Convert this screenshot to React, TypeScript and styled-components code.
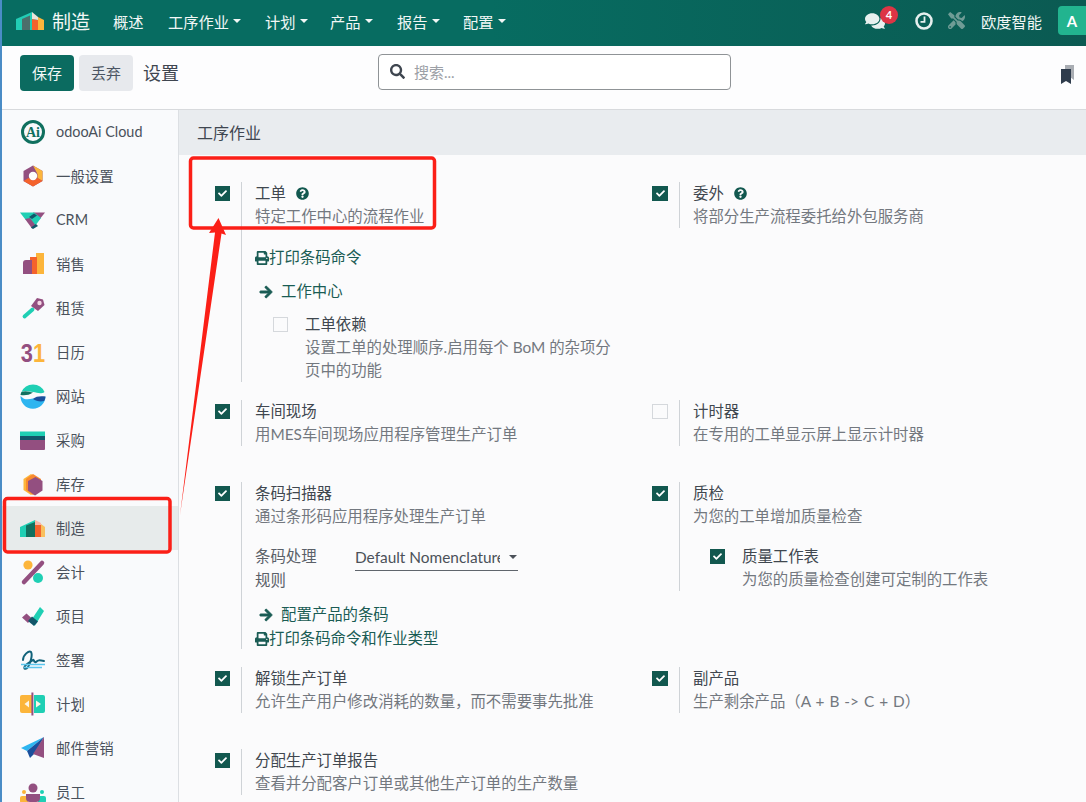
import React from "react";
import styled, { createGlobalStyle } from "styled-components";
import { FaArrowRight, FaCheck, FaComments, FaPrint, FaQuestionCircle, FaSearch, FaTools } from "react-icons/fa";

const Global = createGlobalStyle`
  html, body { margin: 0; padding: 0; height: 802px; overflow: hidden; background: #f9fafb; }
  body { font-family: "Lato", "Noto Sans CJK SC", sans-serif; font-size: 15px; color: #374151; }
  * { box-sizing: border-box; }
`;

const Page = styled.div`
  position: relative; width: 1086px; height: 802px; overflow: hidden;
  border-left: 2px solid #4a8cc6; display: flex; flex-direction: column;
`;
const TopBar = styled.header`
  height: 46px; flex: none; display: flex; align-items: center; color: #f2f7f6; padding-bottom: 5px;
  background: linear-gradient(90deg, #076c61 0%, #076c61 45%, #0b5a52 100%);
`;
const Brand = styled.div`
  display: flex; align-items: center; gap: 7px; margin-left: 13px; margin-right: 21px;
  font-size: 19px; width: 77px; flex: none; white-space: nowrap;
`;
const Menu = styled.nav`display: flex; align-items: center;`;
const MenuItem = styled.span<{ $w: number }>`
  display: flex; align-items: center; gap: 4px; width: ${p => p.$w}px; font-size: 15.25px; white-space: nowrap;
`;
const Caret = styled.i`
  width: 0; height: 0; border-left: 4px solid transparent; border-right: 4px solid transparent;
  border-top: 4px solid currentColor; display: inline-block; flex: none;
`;
const TopRight = styled.div`margin-left: auto; display: flex; align-items: center; height: 41px;`;
const ChatWrap = styled.span`position: relative; display: flex; margin-right: 30px; color: #e8f0ef;`;
const Badge = styled.span`
  position: absolute; left: 15px; top: -5px; width: 18px; height: 18px; border-radius: 50%; background: #dc3545;
  color: #fff; font-size: 11px; font-weight: 700; display: flex; align-items: center; justify-content: center;
`;
const ToolsIcon = styled.span`display: flex; margin: 0 16px 0 15px; color: #6f9c96;`;
const UserName = styled.span`font-size: 15.25px; margin-right: 16px; white-space: nowrap;`;
const Avatar = styled.span`
  width: 28px; height: 29px; background: #22b48f; border-radius: 4px 0 0 4px; color: #fff; font-size: 15px;
  font-weight: 700; display: flex; align-items: center; justify-content: center;
`;
const ControlPanel = styled.div`
  height: 64px; flex: none; background: #fdfdfe; border-bottom: 1px solid #d8dadd;
  display: flex; align-items: center; padding: 0 10px 9px 18px;
`;
const Btn = styled.button<{ $primary?: boolean }>`
  height: 36px; width: 54px; border: 0; border-radius: 4px; padding: 0 0 2px; font: inherit; font-size: 15px; margin-right: 5px;
  background: ${p => (p.$primary ? "#0b6b60" : "#e7e9ed")};
  color: ${p => (p.$primary ? "#f3f8f7" : "#4b5563")};
`;
const PanelTitle = styled.span`font-size: 18px; margin-left: 5px; padding-bottom: 2px; color: #3f4650; width: 235px; flex: none;`;
const SearchBox = styled.div`
  width: 353px; height: 36px; border: 1px solid #8f9396; border-radius: 4px; display: flex; align-items: center;
  padding: 0 0 1px 11px; margin-bottom: 2px; gap: 9px; color: #3f4650; background: #fff;
`;
const Placeholder = styled.span`font-size: 15px; color: #9ca0a6;`;
const BookmarkSlot = styled.span`margin-left: auto; margin-top: 3px; display: flex;`;
const Body = styled.div`flex: 1; display: flex; min-height: 0;`;
const Sidebar = styled.aside`
  width: 177px; flex: none; background: #f9fafc; border-right: 1px solid #dcdfe3; overflow: hidden;
`;
const NavRow = styled.div<{ $active?: boolean }>`
  height: 44px; display: flex; align-items: center; padding: 0 0 1px 18px; gap: 10px; font-size: 14.4px;
  color: #4a515b; background: ${p => (p.$active ? "#e7ebeb" : "transparent")}; white-space: nowrap;
`;
const Main = styled.main`flex: 1; min-width: 0; background: #fbfbfc;`;
const SectionHead = styled.div`
  height: 45px; background: #e9ecef; display: flex; align-items: center; padding: 0 0 2px 18px;
  font-size: 16px; color: #3f4650;
`;
const Grid = styled.div`
  display: grid; grid-template-columns: 438px 438px; padding: 27px 0 0 10px;
`;
const CheckBox = styled.span<{ $on?: boolean }>`
  width: 15px; height: 15px; flex: none; margin-top: 4px; display: flex; align-items: center; justify-content: center;
  color: #fff; border: 1px solid ${p => (p.$on ? "#12584f" : "#d5d8dc")};
  background: ${p => (p.$on ? "#12584f" : "#fbfbfc")};
`;
const Cell = styled.section`
  display: flex; align-items: flex-start; min-height: 82px; padding: 0 0 18px 26px;
  &:nth-child(even) { padding-left: 25px; }
  &:nth-child(even) > ${CheckBox} { width: 16px; }
`;
const Pane = styled.div`
  margin-left: 11px; padding-left: 13px; border-left: 1px solid #cfd3d7; flex: 1; min-width: 0;
`;
const Label = styled.div`
  line-height: 23px; font-size: 15.4px; color: #40474f; display: flex; align-items: center; gap: 10px;
`;
const HelpIcon = styled.span`display: flex; color: #12584f;`;
const Desc = styled.div`line-height: 23px; font-size: 15.4px; color: #73787f; white-space: nowrap;`;
const DescWrap = styled(Desc)`white-space: normal; width: 310px;`;
const DescSpaced = styled(Desc)`word-spacing: 1px;`;
const LinkRow = styled.div<{ $top: number; $arrow?: boolean; $tail?: number }>`
  margin-top: ${p => p.$top}px; margin-bottom: ${p => p.$tail ?? 0}px; line-height: 23px; font-size: 15.4px; color: #1a5c54;
  display: flex; align-items: center; gap: ${p => (p.$arrow ? 8 : 0)}px; padding-left: ${p => (p.$arrow ? 4 : 0)}px;
`;
const ArrowGlyph = styled(FaArrowRight)`stroke: currentColor; stroke-width: 30;`;
const SubSetting = styled.div<{ $top: number; $left: number }>`
  margin-top: ${p => p.$top}px; margin-left: ${p => p.$left}px; display: flex; align-items: flex-start;
`;
const SubText = styled.div`margin-left: 17px;`;
const FieldRow = styled.div`margin-top: 16px; display: flex; align-items: flex-start;`;
const FieldLabel = styled.div`width: 100px; flex: none; line-height: 24px; font-size: 15.4px; color: #5a6068; padding-right: 24px;`;
const SelectBox = styled.div`
  width: 163px; height: 27px; border-bottom: 1px solid #5f656c; display: flex; align-items: center;
  justify-content: space-between; font-size: 15.4px; color: #4b5159; overflow: hidden; padding-right: 1px;
`;
const SelectText = styled.span`width: 145px; overflow: hidden; white-space: nowrap;`;
const Annotation = styled.svg`position: absolute; left: -2px; top: 0; pointer-events: none;`;
const IconSvg = styled.svg`flex: none; display: block; overflow: visible;`;

const NavIcon = ({ children }: { children: React.ReactNode }) => (
  <IconSvg width="26" height="26" viewBox="0 0 26 26">{children}</IconSvg>
);

const teal = "#1fcfb4", purple = "#934f80", orange = "#f98a2f", amber = "#fcb53b", deep = "#12566a", red = "#f4622c";

const icons: Record<string, React.ReactNode> = {
  cloud: <>
    <circle cx="13" cy="13" r="10.5" fill="none" stroke="#10705f" strokeWidth="3" />
    <text x="13" y="18" textAnchor="middle" fontFamily="Liberation Serif, serif" fontWeight="700" fontSize="14" fill="#10705f">Ai</text>
  </>,
  settings: <>
    <path d="M13 2.5 22.5 8v10L13 23.5 3.5 18V8Z" fill={purple} />
    <path d="M13 2.5 22.5 8v10l-5-3V11Z" fill={amber} />
    <path d="M3.5 18 8.5 15 13 17.5l4.500-2.500 5 3L13 23.500Z" fill={red} />
    <circle cx="13" cy="13" r="4.200" fill="#fdfdfd" />
  </>,
  crm: <>
    <path d="M13 5.500H25L19.500 12.500Z" fill={purple} />
    <path d="M0 5.500H14L21 11 15 19 5 12Z" fill={teal} />
    <path d="M5 12 10 11 16 19 12 21.500Z" fill={purple} />
    <path d="M9 10 14 6.500 17 8.500 12 12Z" fill={deep} />
    <path d="M11 20.500 16 17 18 19 13 22Z" fill={deep} />
  </>,
  sales: <>
    <path d="M16 2h8v21h-8Z" fill={amber} />
    <path d="M10 6h7v17h-7Z" fill={red} />
    <path d="M3 12a3 3 0 0 1 3-3h6v14H3Z" fill={purple} />
  </>,
  rental: <>
    <path d="M12.500 14.500 4.500 21.500" stroke={teal} strokeWidth="3.800" strokeLinecap="round" />
    <path d="M17 3 23 4.500 24.500 10 18 16 11 11Z" fill={purple} />
    <circle cx="19.500" cy="8" r="2.200" fill="#f5d5e4" />
  </>,
  calendar: <>
    <text y="23" transform="scale(.84 1)" x="1" fontFamily="Liberation Sans, sans-serif" fontWeight="700" fontSize="26">
      <tspan fill={purple}>3</tspan><tspan fill={amber}>1</tspan>
    </text>
  </>,
  website: <>
    <path d="M1.500 9A12.500 12.500 0 0 1 24.500 9C20 12 17 9 13 9 9 9 6 7 1.500 9Z" fill={teal} />
    <path d="M.5 12C.8 10.500 1 9.500 1.500 9 6 7 9 9 13 9.500 9 12.500 4 12.500.5 12Z" fill="#12705f" />
    <path d="M.5 13C5 18 9 16 13 15.500 17 15 21 15 25.500 13.500A12.500 12.500 0 0 1 .5 13Z" fill="#2eb5f0" />
    <path d="M13 16C16 13 21 13 25.400 13.500 25.400 15 25 16.500 24 18 20 19 16 18 13 16Z" fill="#1a4f9c" />
  </>,
  purchase: <>
    <path d="M0 4.500h25V9H0Z" fill={teal} />
    <path d="M0 9h25v4H0Z" fill={deep} />
    <path d="M0 13h25v9a1 1 0 0 1-1 1H1a1 1 0 0 1-1-1Z" fill={purple} />
  </>,
  inventory: <>
    <path d="M11 3 19 8V19L11 24 3.500 19V8Z" fill={amber} />
    <path d="M13 3 21 8V19L13 24 6 19V8Z" fill={orange} />
    <path d="M15.500 6 22.500 10V19.500L15 24.500 8 19.500V10Z" fill={purple} />
  </>,
  mrp: <>
    <path d="M0 12 15 5V22H0Z" fill={teal} />
    <path d="M6 10.500 15 7V22H6Z" fill="#12705f" />
    <path d="M15 10h6v12h-6Z" fill={red} />
    <path d="M21 9l4 3v10h-4Z" fill={amber} opacity=".8" />
    <path d="M15 5 21 8V10H15Z" fill="#f9b7a8" />
  </>,
  accounting: <>
    <circle cx="8" cy="6" r="4.600" fill={amber} />
    <circle cx="18" cy="19" r="5" fill={teal} />
    <path d="M4 23 22 4" stroke={purple} strokeWidth="4.500" strokeLinecap="round" />
  </>,
  project: <>
    <path d="M2 14.500 6.500 10.500 12 15.500 8 20Z" fill={purple} />
    <path d="M10 19 20 4 24 8 15 22.500Z" fill={teal} />
    <path d="M8 18 12 13.500 18 18.500 14 23Z" fill={deep} />
  </>,
  sign: <>
    <path d="M3 13C3 8 9 3 11 5 13 8 10 17 8 20 6 23 3 22 5 19 7 16 12 14 13 13 14 12 14 16 16 15 18 13 19 13 24 14" fill="none" stroke="#11627a" strokeWidth="2" strokeLinecap="round" />
    <path d="M1 17.500h24M4 20.500h18" stroke="#5cc6ee" strokeWidth="1.400" />
  </>,
  planning: <>
    <path d="M2 4h10v18H2a2 2 0 0 1-2-2V6a2 2 0 0 1 2-2Z" fill={amber} />
    <path d="M14 4h9a2 2 0 0 1 2 2v14a2 2 0 0 1-2 2h-9Z" fill={teal} />
    <path d="M12.400 1.500v23" stroke={purple} strokeWidth="2" />
    <path d="M9 9.500 4.500 13 9 16.500ZM16 9.500 21 13l-5 3.500Z" fill="#fdf6e8" />
  </>,
  mail: <>
    <path d="M24 2 1 13l6 3Z" fill="#2eb5f0" />
    <path d="M24 2 7 16l3 7 5-5Z" fill="#1a4f9c" />
    <path d="M24 2 13 19l11 4Z" fill={purple} />
  </>,
  employee: <>
    <circle cx="4" cy="13" r="2" fill={amber} />
    <circle cx="22" cy="13" r="2" fill={teal} />
    <path d="M0 19a2 2 0 0 1 2-2h6v7H2a2 2 0 0 1-2-2Z" fill={amber} />
    <path d="M18 17h6a2 2 0 0 1 2 2v3a2 2 0 0 1-2 2h-6Z" fill={teal} />
    <circle cx="13" cy="9" r="4.500" fill={purple} />
    <path d="M6 15h14v4a4 4 0 0 1-4 4h-6a4 4 0 0 1-4-4Z" fill={purple} />
  </>,
};

const navItems = [
  ["cloud", "odooAi Cloud"], ["settings", "一般设置"], ["crm", "CRM"], ["sales", "销售"], ["rental", "租赁"],
  ["calendar", "日历"], ["website", "网站"], ["purchase", "采购"], ["inventory", "库存"], ["mrp", "制造"],
  ["accounting", "会计"], ["project", "项目"], ["sign", "签署"], ["planning", "计划"], ["mail", "邮件营销"], ["employee", "员工"],
];

const menu: [string, number, boolean][] = [
  ["概述", 55, false], ["工序作业", 97, true], ["计划", 65, true], ["产品", 67, true], ["报告", 66, true], ["配置", 60, true],
];

const Check = ({ on }: { on?: boolean }) => <CheckBox $on={on}>{on && <FaCheck size={9} />}</CheckBox>;

const Setting = ({ on, children }: { on?: boolean; children: React.ReactNode }) => (
  <Cell><Check on={on} /><Pane>{children}</Pane></Cell>
);

const PrintLink = ({ top, tail, text }: { top: number; tail?: number; text: string }) => (
  <LinkRow $top={top} $tail={tail}><FaPrint size={14} />{text}</LinkRow>
);
const ArrowLink = ({ top, text }: { top: number; text: string }) => (
  <LinkRow $top={top} $arrow><ArrowGlyph size={14} />{text}</LinkRow>
);
const Help = () => <HelpIcon><FaQuestionCircle size={13} /></HelpIcon>;

export default function App() {
  return (
    <Page>
      <Global />
      <TopBar>
        <Brand>
          <IconSvg width="30" height="24" viewBox="0 0 30 24">
            <path d="M1 10 17 3v18H1Z" fill="#22cdb5" />
            <path d="M7 10 15 6.500V21H7Z" fill="#4c6f6b" />
            <path d="M17 10l6 1v10h-6Z" fill="#f4622c" />
            <path d="M23 8l6 3v10h-6Z" fill="#fcb53b" />
            <path d="M17 3l6 5v3l-6-1Z" fill="#e9e3da" />
          </IconSvg>
          制造
        </Brand>
        <Menu>
          {menu.map(([t, w, c]) => (
            <MenuItem key={t} $w={w}>{t}{c && <Caret />}</MenuItem>
          ))}
        </Menu>
        <TopRight>
          <ChatWrap><FaComments size={20} /><Badge>4</Badge></ChatWrap>
          <IconSvg width="18" height="18" viewBox="0 0 18 18">
            <circle cx="9" cy="9" r="7.500" fill="none" stroke="#e6efee" strokeWidth="2.600" />
            <path d="M9.500 4.500V9.800H5.500" fill="none" stroke="#e6efee" strokeWidth="1.800" />
          </IconSvg>
          <ToolsIcon><FaTools size={17} /></ToolsIcon>
          <UserName>欧度智能</UserName>
          <Avatar>A</Avatar>
        </TopRight>
      </TopBar>
      <ControlPanel>
        <Btn $primary>保存</Btn>
        <Btn>丢弃</Btn>
        <PanelTitle>设置</PanelTitle>
        <SearchBox><FaSearch size={15} /><Placeholder>搜索...</Placeholder></SearchBox>
        <BookmarkSlot>
          <IconSvg width="16" height="22" viewBox="0 0 16 22">
            <path d="M5 1h9v15l-4-3-5 3Z" fill="#a9adb3" />
            <path d="M1 5h10v15l-5-3-5 3Z" fill="#2f3c4c" />
          </IconSvg>
        </BookmarkSlot>
      </ControlPanel>
      <Body>
        <Sidebar>
          {navItems.map(([k, t]) => (
            <NavRow key={t} $active={k === "mrp"}>
              <NavIcon>{icons[k]}</NavIcon>{t}
            </NavRow>
          ))}
        </Sidebar>
        <Main>
          <SectionHead>工序作业</SectionHead>
          <Grid>
            <Setting on>
              <Label>工单<Help /></Label>
              <Desc>特定工作中心的流程作业</Desc>
              <PrintLink top={18} text="打印条码命令" />
              <ArrowLink top={11} text="工作中心" />
              <SubSetting $top={10} $left={18}>
                <Check />
                <SubText>
                  <Label>工单依赖</Label>
                  <DescWrap>设置工单的处理顺序.启用每个 BoM 的杂项分页中的功能</DescWrap>
                </SubText>
              </SubSetting>
            </Setting>
            <Setting on>
              <Label>委外<Help /></Label>
              <Desc>将部分生产流程委托给外包服务商</Desc>
            </Setting>
            <Setting on>
              <Label>车间现场</Label>
              <Desc>用MES车间现场应用程序管理生产订单</Desc>
            </Setting>
            <Setting>
              <Label>计时器</Label>
              <Desc>在专用的工单显示屏上显示计时器</Desc>
            </Setting>
            <Setting on>
              <Label>条码扫描器</Label>
              <Desc>通过条形码应用程序处理生产订单</Desc>
              <FieldRow>
                <FieldLabel>条码处理规则</FieldLabel>
                <SelectBox><SelectText>Default Nomenclature</SelectText><Caret /></SelectBox>
              </FieldRow>
              <ArrowLink top={11} text="配置产品的条码" />
              <PrintLink top={1} tail={-1} text="打印条码命令和作业类型" />
            </Setting>
            <Setting on>
              <Label>质检</Label>
              <Desc>为您的工单增加质量检查</Desc>
              <SubSetting $top={17} $left={17}>
                <Check on />
                <SubText>
                  <Label>质量工作表</Label>
                  <Desc>为您的质量检查创建可定制的工作表</Desc>
                </SubText>
              </SubSetting>
            </Setting>
            <Setting on>
              <Label>解锁生产订单</Label>
              <Desc>允许生产用户修改消耗的数量，而不需要事先批准</Desc>
            </Setting>
            <Setting on>
              <Label>副产品</Label>
              <DescSpaced>生产剩余产品（A + B -&gt; C + D）</DescSpaced>
            </Setting>
            <Setting on>
              <Label>分配生产订单报告</Label>
              <Desc>查看并分配客户订单或其他生产订单的生产数量</Desc>
            </Setting>
          </Grid>
        </Main>
      </Body>
      <Annotation width="1086" height="802" viewBox="0 0 1086 802">
        <rect x="190.500" y="158" width="244" height="70" rx="3" fill="none" stroke="#fb1f17" strokeWidth="3.500" />
        <rect x="4.500" y="498.500" width="165.500" height="53.500" rx="3" fill="none" stroke="#fb1f17" strokeWidth="3.500" />
        <path d="M218.500 218 226 235 221.500 233.500 180 515 215 232.500 209 233Z" fill="#fb1f17" />
      </Annotation>
    </Page>
  );
}
